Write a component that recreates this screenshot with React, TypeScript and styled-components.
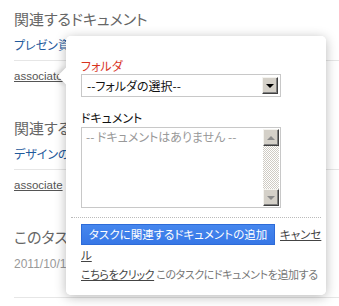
import styled, { createGlobalStyle } from 'styled-components';

const Global = createGlobalStyle`
  html, body {
    margin: 0;
    padding: 0;
    background: #fff;
  }
  body {
    font-family: 'Noto Sans CJK JP', 'DejaVu Sans', sans-serif;
    font-feature-settings: 'palt';
  }
`;

const Page = styled.div`
  position: relative;
  width: 339px;
  height: 306px;
  overflow: hidden;
  padding: 9px 0 0 14px;
  box-sizing: border-box;
`;

const Section = styled.section<{ $gap?: number }>`
  margin-bottom: ${(p) => p.$gap ?? 33}px;
`;

const Heading = styled.h2`
  margin: 0;
  font-size: 15px;
  line-height: 20px;
  font-weight: normal;
  color: #666;
  white-space: nowrap;
`;

const DocLink = styled.div`
  margin-top: 8px;
  padding-bottom: 7px;
  border-bottom: 1px solid #e6e6e6;
  font-size: 12px;
  line-height: 16px;
  color: #1f5a9c;
  white-space: nowrap;
`;

const Associate = styled.a`
  display: inline-block;
  margin-top: 7px;
  font-family: 'Liberation Sans', Arial, sans-serif;
  font-size: 11.5px;
  line-height: 14px;
  color: #555;
  text-decoration: underline;
`;

const DateLine = styled.div`
  margin-top: 10px;
  padding-bottom: 26px;
  border-bottom: 1px solid #e6e6e6;
  font-family: 'Liberation Sans', Arial, sans-serif;
  font-size: 12px;
  line-height: 14px;
  color: #999;
`;

const Popup = styled.div`
  position: absolute;
  left: 66px;
  top: 36px;
  width: 260px;
  height: 259px;
  border-radius: 5px;
  box-shadow: 0 2px 12px rgba(0, 0, 0, 0.28);
  z-index: 2;

  &::before {
    content: '';
    position: absolute;
    left: -6px;
    top: 34px;
    width: 12px;
    height: 12px;
    background: #fff;
    transform: rotate(45deg);
    box-shadow: -2px 2px 5px rgba(0, 0, 0, 0.18);
  }
`;

const PopupBody = styled.div`
  position: relative;
  z-index: 1;
  height: 100%;
  box-sizing: border-box;
  padding: 23px 3px 0 15px;
  background: #fff;
  border-radius: 5px;
`;

const Label = styled.div<{ $red?: boolean }>`
  font-size: 12px;
  line-height: 14px;
  color: ${(p) => (p.$red ? '#d8341f' : '#111')};
`;

const SelectBox = styled.div`
  display: flex;
  align-items: center;
  justify-content: space-between;
  margin-top: 1px;
  width: 200px;
  height: 23px;
  box-sizing: border-box;
  border: 1px solid #c8c8c8;
  padding: 0 2px 0 5px;
  font-size: 12px;
  color: #111;
`;

const ClassicButton = styled.span`
  display: flex;
  align-items: center;
  justify-content: center;
  width: 16px;
  height: 17px;
  box-sizing: border-box;
  background: #d4d0c8;
  border-style: solid;
  border-width: 1px;
  border-color: #f4f3ef #404040 #404040 #f4f3ef;
  box-shadow: inset -1px -1px 0 #808080;
`;

const Tri = styled.span<{ $up?: boolean; $color: string }>`
  width: 0;
  height: 0;
  border-left: 4px solid transparent;
  border-right: 4px solid transparent;
  ${(p) =>
    p.$up
      ? `border-bottom: 4px solid ${p.$color};`
      : `border-top: 4px solid ${p.$color};`}
`;

const TextArea = styled.div`
  display: flex;
  justify-content: space-between;
  margin-top: 2px;
  width: 200px;
  height: 81px;
  box-sizing: border-box;
  border: 1px solid #c8c8c8;
  padding: 0 0 0 4px;
`;

const Placeholder = styled.span`
  font-size: 12px;
  line-height: 18px;
  color: #999;
  white-space: nowrap;
`;

const ScrollBar = styled.div`
  display: flex;
  flex-direction: column;
  justify-content: space-between;
  width: 16px;
  padding: 1px 1px 1px 0;
  background-color: #fff;
  background-image: conic-gradient(#cfcbc3 25%, #fff 0 50%, #cfcbc3 0 75%, #fff 0);
  background-size: 2px 2px;
  background-clip: content-box;
`;

const Divider = styled.div`
  margin: 9px 0 6px -10px;
  width: 250px;
  border-top: 1px dotted #bbb;
`;

const ActionLine = styled.div`
  font-size: 11.5px;
  line-height: 20px;
  color: #444;
`;

const PrimaryButton = styled.button`
  display: inline-block;
  vertical-align: top;
  width: 194px;
  height: 21px;
  margin-right: 5px;
  padding: 0;
  border: 1px solid #2d6bd8;
  background: linear-gradient(#4687ee, #3777e6);
  color: #fff;
  font-family: inherit;
  font-feature-settings: 'palt';
  font-size: 11.5px;
  line-height: 19px;
  white-space: nowrap;
`;

const TextLink = styled.a`
  color: #444;
  text-decoration: underline;
`;

const Hint = styled.div`
  font-size: 11px;
  line-height: 18px;
  letter-spacing: -0.4px;
  color: #777;
  white-space: nowrap;
`;

export default function App() {
  return (
    <>
      <Global />
      <Page>
        <Section>
          <Heading>関連するドキュメント</Heading>
          <DocLink>プレゼン資料のドキュメント一覧</DocLink>
          <Associate>associate</Associate>
        </Section>
        <Section>
          <Heading>関連するドキュメント</Heading>
          <DocLink>デザインのドキュメント一覧</DocLink>
          <Associate>associate</Associate>
        </Section>
        <Section $gap={0}>
          <Heading>このタスクのドキュメント</Heading>
          <DateLine>2011/10/10</DateLine>
        </Section>

        <Popup>
          <PopupBody>
            <Label $red>フォルダ</Label>
            <SelectBox>
              <span>--フォルダの選択--</span>
              <ClassicButton>
                <Tri $color="#000" />
              </ClassicButton>
            </SelectBox>
            <Label style={{ marginTop: 14 }}>ドキュメント</Label>
            <TextArea>
              <Placeholder>-- ドキュメントはありません --</Placeholder>
              <ScrollBar>
                <ClassicButton>
                  <Tri $up $color="#8a8a8a" />
                </ClassicButton>
                <ClassicButton>
                  <Tri $color="#8a8a8a" />
                </ClassicButton>
              </ScrollBar>
            </TextArea>
            <Divider />
            <ActionLine>
              <PrimaryButton>タスクに関連するドキュメントの追加</PrimaryButton>
              <TextLink>キャンセル</TextLink>
            </ActionLine>
            <Hint>
              <TextLink>こちらをクリック</TextLink> このタスクにドキュメントを追加する
            </Hint>
          </PopupBody>
        </Popup>
      </Page>
    </>
  );
}
